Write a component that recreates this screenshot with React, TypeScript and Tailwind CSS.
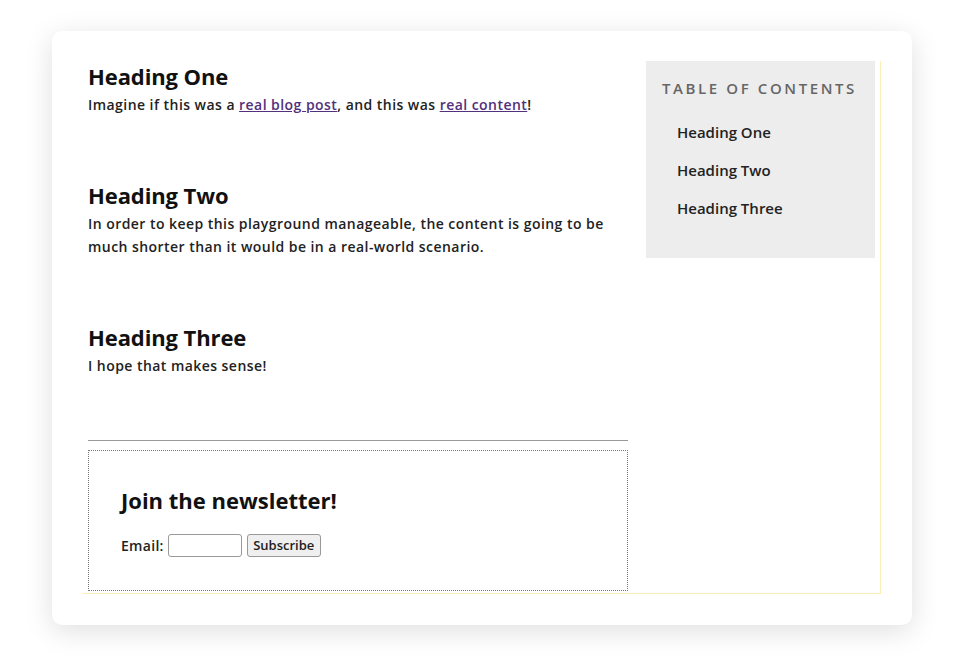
const sections = [
  {
    title: 'Heading One',
    body: (
      <>
        Imagine if this was a{' '}
        <a href="#" className="text-[#52307c] underline">
          real blog post
        </a>
        , and this was{' '}
        <a href="#" className="text-[#52307c] underline">
          real content
        </a>
        !
      </>
    ),
  },
  {
    title: 'Heading Two',
    body: (
      <>
        In order to keep this playground manageable, the content is going to be much shorter than it
        would be in a real-world scenario.
      </>
    ),
  },
  {
    title: 'Heading Three',
    body: <>I hope that makes sense!</>,
  },
];

export default function App() {
  return (
    <div className="min-h-screen bg-white pt-[31px] pl-[52px] font-['Open_Sans',sans-serif]">
      <div className="w-[860px] h-[594px] rounded-[10px] bg-white shadow-[0_6px_28px_rgba(0,0,0,0.13)] pt-[30px] pl-[30px]">
        <div className="w-[799px] h-[533px] flex border-r border-b border-[#fbefb8]">
          <main className="w-[546px] pl-[6px] flex flex-col">
            <div className="flex flex-col gap-[64px]">
              {sections.map((s) => (
                <section key={s.title}>
                  <h2 className="text-[22px] leading-[30px] font-bold tracking-[-0.1px] text-[#111]">
                    {s.title}
                  </h2>
                  <p className="mt-[2px] text-[14px] leading-[23px] font-semibold tracking-[0.45px] text-[#222]">
                    {s.body}
                  </p>
                </section>
              ))}
            </div>
            <hr className="mt-[63px] border-t border-[#999]" />
            <div className="mt-[9px] h-[141px] border border-dotted border-[#777] pl-[32px] pt-[34px]">
              <h3 className="text-[22px] leading-[30px] font-bold text-[#111]">Join the newsletter!</h3>
              <form className="mt-[19px] flex items-center gap-[4px] text-[14px] font-semibold tracking-[0.3px] text-[#222]">
                <label htmlFor="email">Email:</label>
                <input
                  id="email"
                  type="email"
                  className="w-[74px] h-[23px] border border-[#999] rounded-[3px] bg-white"
                />
                <button
                  type="button"
                  className="ml-[1px] h-[23px] w-[74px] text-[13px] tracking-normal border border-[#999] rounded-[3px] bg-[#efefef] text-[#222]"
                >
                  Subscribe
                </button>
              </form>
            </div>
          </main>
          <aside className="ml-[18px] w-[229px] h-[197px] bg-[#ededed] pl-[16px] pt-[16px]">
            <h4 className="text-[15px] leading-[22px] tracking-[2.6px] font-semibold text-[#666]">
              TABLE OF CONTENTS
            </h4>
            <ul className="mt-[22px] pl-[15px] flex flex-col gap-[16px] text-[15px] leading-[22px] font-semibold text-[#222]">
              <li>
                <a href="#">Heading One</a>
              </li>
              <li>
                <a href="#">Heading Two</a>
              </li>
              <li>
                <a href="#">Heading Three</a>
              </li>
            </ul>
          </aside>
        </div>
      </div>
    </div>
  );
}
